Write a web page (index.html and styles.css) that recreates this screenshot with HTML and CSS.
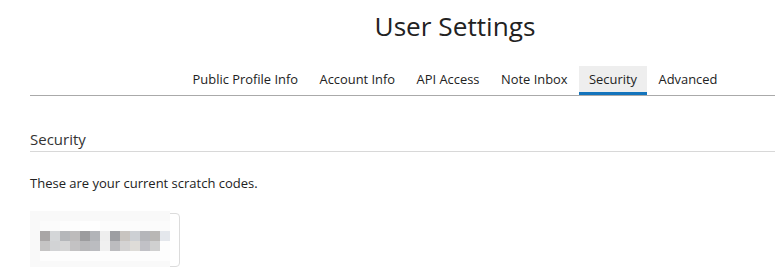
FILE: index.html
```html
<!DOCTYPE html>
<html lang="en">
<head>
    <meta charset="UTF-8">
    <meta name="viewport" content="width=device-width, initial-scale=1.0">
    <title>User Settings</title>
    <link rel="stylesheet" href="styles.css">
</head>
<body>
    <div class="page">
        <h1 class="title">User Settings</h1>

        <nav class="tabs">
            <a href="#" class="tab">Public Profile Info</a>
            <a href="#" class="tab">Account Info</a>
            <a href="#" class="tab">API Access</a>
            <a href="#" class="tab">Note Inbox</a>
            <a href="#" class="tab active">Security</a>
            <a href="#" class="tab">Advanced</a>
        </nav>

        <h2 class="section-title">Security</h2>
        <p class="intro">These are your current scratch codes.</p>

        <!-- Codigos ocultos (pixelados) -->
        <div class="codes">
            <div class="redacted">
                <div class="row row-top"></div>
                <div class="row row-one"></div>
                <div class="row row-two"></div>
                <div class="row row-low"></div>
            </div>
        </div>
    </div>
</body>
</html>
```

FILE: styles.css
```css
body {
    font-family: 'Open Sans', 'Liberation Sans', sans-serif;
    margin: 0;
    padding: 0;
    background: #fff;
    color: #222;
    overflow: hidden;
}

.page {
    margin-left: 30px;
    width: 850px;
}

.title {
    margin: 0;
    padding-top: 7px;
    font-size: 26.2px;
    font-weight: 400;
    line-height: 38px;
    text-align: center;
    color: #222;
}

/* Pestañas */
.tabs {
    display: flex;
    justify-content: center;
    gap: 1.5px;
    margin-top: 21px;
    border-bottom: 1px solid #aaa;
}

.tab {
    display: block;
    padding: 0 10px;
    height: 26px;
    line-height: 26px;
    font-size: 12.9px;
    color: #222;
    text-decoration: none;
    border-bottom: 3px solid transparent;
}

.tab.active {
    background-color: #eeeeee;
    border-bottom-color: #1474bc;
}

.section-title {
    margin: 31px 0 0;
    font-size: 15px;
    font-weight: 400;
    line-height: 24px;
    color: #333;
    border-bottom: 1px solid #d8d8d8;
}

.intro {
    margin: 21px 0 0;
    font-size: 13px;
    line-height: 20px;
    color: #222;
}

/* Caja de codigos */
.codes {
    position: relative;
    margin-top: 20px;
    width: 148px;
    height: 52px;
    border: 1px solid #dcdcdc;
    border-radius: 4px;
}

.redacted {
    position: absolute;
    top: -3px;
    left: -1px;
    width: 140px;
    height: 60px;
    background-color: #f9f9f9;
    padding: 10px 0 0 10px;
    box-sizing: border-box;
}

.row {
    height: 10px;
}

.row-top {
    background: linear-gradient(to right, #fbfbfb 0 20px, #fdfdfd 20px 40px, #fefefe 40px 60px, #fcfcfc 60px 100px, #fbfbfb 100px 130px);
}

.row-one {
    background: linear-gradient(to right,
        #a9a6a6 0 10px, #d4d6d8 10px 20px, #b5b7ba 20px 30px, #bdbbbb 30px 40px,
        #9c9c9e 40px 50px, #b2b4b8 50px 60px, #eeeeee 60px 70px, #9d9ea2 70px 80px,
        #c8c4c0 80px 90px, #cdd0d4 90px 100px, #b5b6ba 100px 110px, #b9b7b5 110px 120px,
        #e4e7ec 120px 130px);
}

.row-two {
    background: linear-gradient(to right,
        #c5c4c4 0 10px, #d2d3d5 10px 20px, #d6d6d6 20px 30px, #c3c2c3 30px 40px,
        #b9b9bb 40px 50px, #bbbcc0 50px 60px, #f0f0f0 60px 70px, #bcbcbf 70px 80px,
        #d4d3d3 80px 90px, #dedcd8 90px 100px, #c1c1c6 100px 110px, #d0d0d0 110px 120px,
        #fdfdfd 120px 130px);
}

.row-low {
    background-color: #fdfdfd;
}
```
